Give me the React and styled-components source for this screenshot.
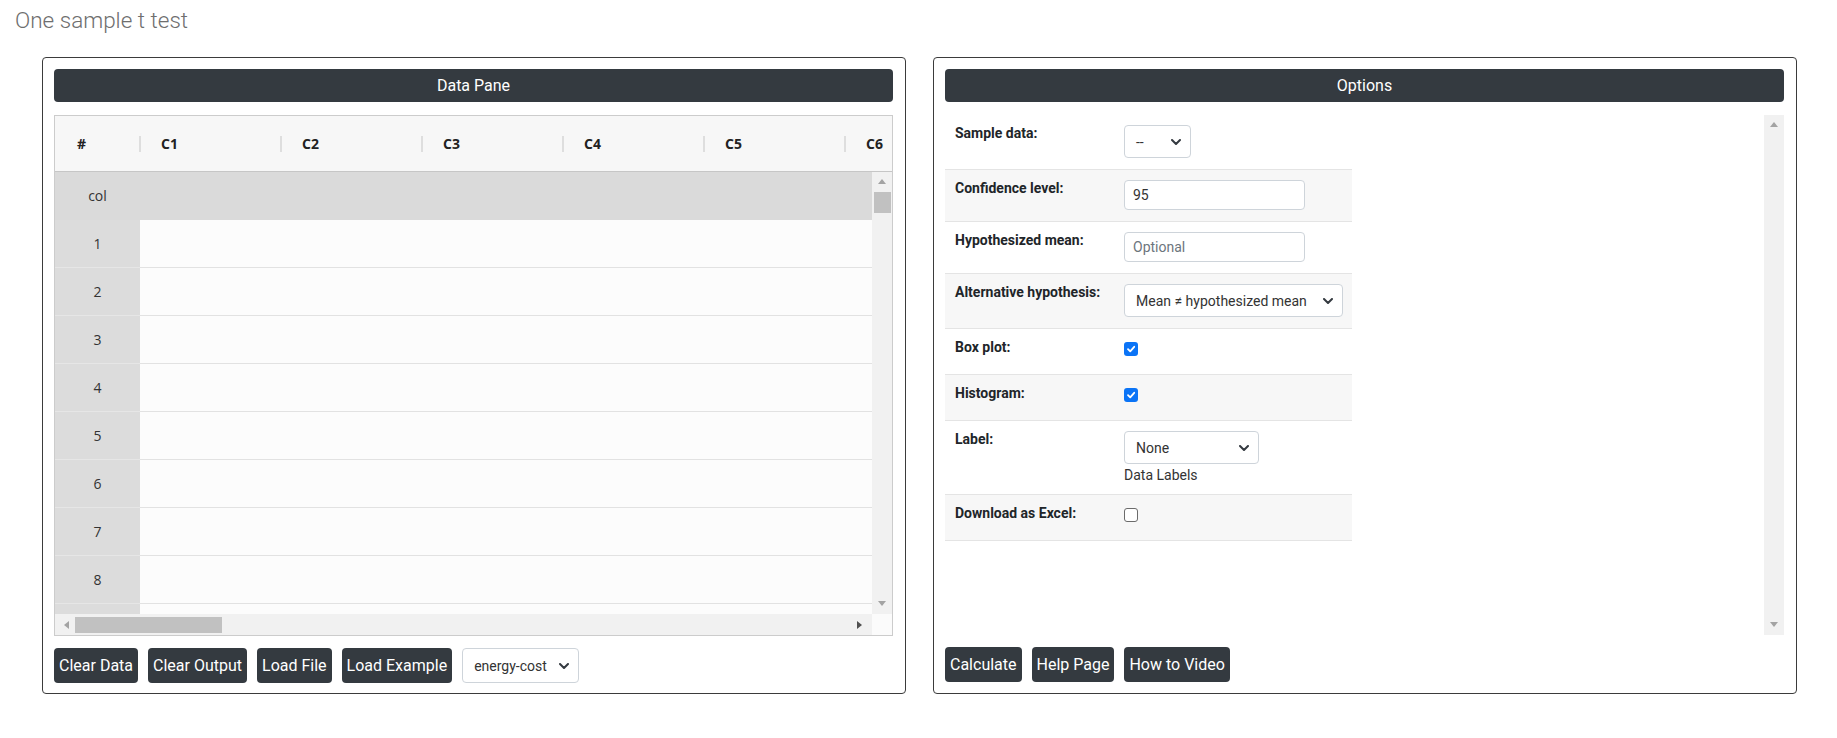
import React from 'react';
import styled, { createGlobalStyle } from 'styled-components';

const GlobalStyle = createGlobalStyle`
  html, body {
    margin: 0;
    padding: 0;
    background: #fff;
  }
  body {
    font-family: Roboto, "Liberation Sans", sans-serif;
    color: #212529;
  }
  * {
    box-sizing: border-box;
  }
`;

const columns = ['C1', 'C2', 'C3', 'C4', 'C5', 'C6'];
const rows = ['1', '2', '3', '4', '5', '6', '7', '8', ''];

const App = () => {
  return (
    <Page>
      <GlobalStyle />
      <Title>One sample t test</Title>

      <PanelRow>
        <Panel>
          <PaneHeader>Data Pane</PaneHeader>

          <Sheet>
            <SheetHead>
              <CornerHead>#</CornerHead>
              {columns.map((c) => (
                <ColHead key={c}>{c}</ColHead>
              ))}
            </SheetHead>

            <SheetBody>
              <RowsArea>
                <SheetRow $label>
                  <RowHead $label>col</RowHead>
                  {columns.map((c) => (
                    <Cell key={c} $label />
                  ))}
                </SheetRow>
                {rows.map((r, i) => (
                  <SheetRow key={i}>
                    <RowHead>{r}</RowHead>
                    {columns.map((c) => (
                      <Cell key={c} />
                    ))}
                  </SheetRow>
                ))}
              </RowsArea>
              <VTrack>
                <Arrow $dir="up" />
                <VThumb />
                <Spacer />
                <Arrow $dir="down" />
              </VTrack>
            </SheetBody>

            <HBar>
              <HTrack>
                <Arrow $dir="left" />
                <HThumb />
                <Spacer />
                <Arrow $dir="right" />
              </HTrack>
              <ScrollCorner />
            </HBar>
          </Sheet>

          <ButtonRow>
            <DarkButton>Clear Data</DarkButton>
            <DarkButton>Clear Output</DarkButton>
            <DarkButton>Load File</DarkButton>
            <DarkButton>Load Example</DarkButton>
            <Select $width={117} $height={35} value="energy-cost" />
          </ButtonRow>
        </Panel>

        <Panel>
          <PaneHeader>Options</PaneHeader>

          <OptionsBox>
            <OptionsTable>
              <OptionRow>
                <OptionLabel>Sample data:</OptionLabel>
                <OptionControl>
                  <Select $width={67} $height={33} value="--" />
                </OptionControl>
              </OptionRow>
              <OptionRow $shade>
                <OptionLabel>Confidence level:</OptionLabel>
                <OptionControl>
                  <TextInput readOnly value="95" />
                </OptionControl>
              </OptionRow>
              <OptionRow>
                <OptionLabel>Hypothesized mean:</OptionLabel>
                <OptionControl>
                  <TextInput readOnly placeholder="Optional" />
                </OptionControl>
              </OptionRow>
              <OptionRow $shade>
                <OptionLabel>Alternative hypothesis:</OptionLabel>
                <OptionControl>
                  <Select $width={219} $height={33} value="Mean ≠ hypothesized mean" />
                </OptionControl>
              </OptionRow>
              <OptionRow>
                <OptionLabel>Box plot:</OptionLabel>
                <OptionControl>
                  <Checkbox checked />
                </OptionControl>
              </OptionRow>
              <OptionRow $shade>
                <OptionLabel>Histogram:</OptionLabel>
                <OptionControl>
                  <Checkbox checked />
                </OptionControl>
              </OptionRow>
              <OptionRow>
                <OptionLabel>Label:</OptionLabel>
                <OptionControl>
                  <Select $width={135} $height={33} value="None" />
                  <HelpText>Data Labels</HelpText>
                </OptionControl>
              </OptionRow>
              <OptionRow $shade>
                <OptionLabel>Download as Excel:</OptionLabel>
                <OptionControl>
                  <Checkbox />
                </OptionControl>
              </OptionRow>
            </OptionsTable>

            <VTrack>
              <Arrow $dir="up" />
              <Spacer />
              <Arrow $dir="down" />
            </VTrack>
          </OptionsBox>

          <ButtonRow>
            <DarkButton>Calculate</DarkButton>
            <DarkButton>Help Page</DarkButton>
            <DarkButton>How to Video</DarkButton>
          </ButtonRow>
        </Panel>
      </PanelRow>
    </Page>
  );
};

const Select = ({ value, $width, $height }) => (
  <SelectBox $width={$width} $height={$height}>
    <span>{value}</span>
    <svg width="10" height="6" viewBox="0 0 10 6">
      <polyline points="1,1 5,5 9,1" fill="none" stroke="#343a40" strokeWidth="2" strokeLinecap="round" strokeLinejoin="round" />
    </svg>
  </SelectBox>
);

const Checkbox = ({ checked }) => (
  <CheckWrap>
    <CheckBoxMark $checked={checked}>
      {checked && (
        <svg width="10" height="10" viewBox="0 0 10 10">
          <polyline points="2,5.2 4.2,7.4 8.2,2.8" fill="none" stroke="#fff" strokeWidth="1.8" strokeLinecap="round" strokeLinejoin="round" />
        </svg>
      )}
    </CheckBoxMark>
  </CheckWrap>
);

// Styled components
const Page = styled.div`
  width: 1837px;
  height: 738px;
  overflow: hidden;
`;

const Title = styled.h1`
  margin: 0;
  padding: 7px 0 0 15px;
  font-size: 22.5px;
  line-height: 26px;
  font-weight: 300;
  color: #6e6e6e;
`;

const PanelRow = styled.div`
  display: flex;
  gap: 27px;
  margin-top: 24px;
  padding-left: 42px;
`;

const Panel = styled.section`
  width: 864px;
  height: 637px;
  border: 1px solid #3b3b3b;
  border-radius: 4px;
  padding: 11px 12px 10px 11px;
  display: flex;
  flex-direction: column;
`;

const PaneHeader = styled.div`
  height: 33px;
  flex: none;
  margin-bottom: 13px;
  background: #343a40;
  border-radius: 4px;
  color: #fff;
  font-size: 16px;
  display: flex;
  align-items: center;
  justify-content: center;
`;

const Sheet = styled.div`
  height: 521px;
  border: 1px solid #cccccc;
  display: flex;
  flex-direction: column;
  overflow: hidden;
  font-family: "Open Sans", "Liberation Sans", sans-serif;
  font-size: 14px;
  color: #222;
`;

const SheetHead = styled.div`
  height: 56px;
  flex: none;
  display: flex;
  align-items: center;
  background: #f7f7f7;
  border-bottom: 1px solid #c6c6c6;
  overflow: hidden;
  font-weight: 700;
`;

const CornerHead = styled.div`
  width: 84px;
  flex: none;
  padding-left: 22px;
`;

const ColHead = styled.div`
  width: 141px;
  flex: none;
  position: relative;
  padding-left: 22px;

  &::before {
    content: '';
    position: absolute;
    left: 0;
    top: 50%;
    margin-top: -8px;
    width: 2px;
    height: 16px;
    background: #dedede;
  }
`;

const SheetBody = styled.div`
  flex: 1;
  display: flex;
  min-height: 0;
`;

const RowsArea = styled.div`
  flex: 1;
  overflow: hidden;
`;

const SheetRow = styled.div`
  display: flex;
  height: 48px;
  background: ${(p) => (p.$label ? '#dadada' : '#fcfcfc')};
`;

const RowHead = styled.div`
  width: 85px;
  flex: none;
  display: flex;
  align-items: center;
  justify-content: center;
  background: ${(p) => (p.$label ? '#dadada' : '#dcdcdc')};
  border-bottom: 1px solid ${(p) => (p.$label ? '#dadada' : '#e6e6e6')};
  color: #333;
`;

const Cell = styled.div`
  width: 141px;
  flex: none;
  border-bottom: 1px solid ${(p) => (p.$label ? '#dadada' : '#e2e2e2')};
`;

const VTrack = styled.div`
  width: 20px;
  flex: none;
  background: #f1f1f1;
  display: flex;
  flex-direction: column;
  align-items: center;
  padding: 7px 0 8px;
`;

const Spacer = styled.div`
  flex: 1;
`;

const VThumb = styled.div`
  width: 17px;
  height: 21px;
  margin-top: 8px;
  background: #c1c1c1;
`;

const HBar = styled.div`
  height: 21px;
  flex: none;
  display: flex;
`;

const HTrack = styled.div`
  flex: 1;
  background: #f1f1f1;
  display: flex;
  align-items: center;
  padding: 0 10px 0 9px;
`;

const HThumb = styled.div`
  width: 147px;
  height: 16px;
  margin-left: 6px;
  background: #c1c1c1;
`;

const ScrollCorner = styled.div`
  width: 20px;
  background: #fbfbfb;
`;

const arrowBorders = {
  up: 'border-left: 4px solid transparent; border-right: 4px solid transparent; border-bottom: 5px solid #a3a3a3;',
  down: 'border-left: 4px solid transparent; border-right: 4px solid transparent; border-top: 5px solid #a3a3a3;',
  left: 'border-top: 4px solid transparent; border-bottom: 4px solid transparent; border-right: 5px solid #a3a3a3;',
  right: 'border-top: 4px solid transparent; border-bottom: 4px solid transparent; border-left: 5px solid #505050;',
};

const Arrow = styled.span`
  width: 0;
  height: 0;
  flex: none;
  ${(p) => arrowBorders[p.$dir]}
`;

const ButtonRow = styled.div`
  display: flex;
  align-items: center;
  gap: 10px;
  margin-top: 12px;
`;

const DarkButton = styled.button`
  height: 35px;
  padding: 0 5px;
  border: none;
  border-radius: 4px;
  background: #343a40;
  color: #fff;
  font-family: Roboto, "Liberation Sans", sans-serif;
  font-size: 16px;
  cursor: pointer;
`;

const SelectBox = styled.div`
  width: ${(p) => p.$width}px;
  height: ${(p) => p.$height}px;
  border: 1px solid #ced4da;
  border-radius: 4px;
  background: #fff;
  padding: 0 9px 0 11px;
  display: flex;
  align-items: center;
  justify-content: space-between;
  font-size: 14px;
  color: #333;
  white-space: nowrap;
`;

const OptionsBox = styled.div`
  height: 520px;
  display: flex;
  justify-content: space-between;
`;

const OptionsTable = styled.div`
  width: 407px;
  align-self: flex-start;
`;

const OptionRow = styled.div`
  display: grid;
  grid-template-columns: 179px 1fr;
  background: ${(p) => (p.$shade ? '#f7f7f7' : '#fff')};
  border-bottom: 1px solid #e4e4e4;
`;

const OptionLabel = styled.div`
  padding: 8px 10px;
  font-size: 14px;
  line-height: 21px;
  font-weight: 700;
  color: #212529;
`;

const OptionControl = styled.div`
  padding: 10px 0 11px;
`;

const TextInput = styled.input`
  width: 181px;
  height: 30px;
  border: 1px solid #ced4da;
  border-radius: 4px;
  padding: 0 8px;
  font-family: Roboto, "Liberation Sans", sans-serif;
  font-size: 14px;
  color: #333;
  outline: none;

  &::placeholder {
    color: #6c757d;
  }
`;

const CheckWrap = styled.div`
  height: 24px;
  padding-top: 3px;
`;

const CheckBoxMark = styled.span`
  width: 14px;
  height: 14px;
  display: flex;
  align-items: center;
  justify-content: center;
  border-radius: 3px;
  background: ${(p) => (p.$checked ? '#0b74f6' : '#fff')};
  border: ${(p) => (p.$checked ? 'none' : '1px solid #6b6b6b')};
`;

const HelpText = styled.div`
  margin-top: 3px;
  font-size: 14px;
  line-height: 16px;
  color: #333;
`;

export default App;
